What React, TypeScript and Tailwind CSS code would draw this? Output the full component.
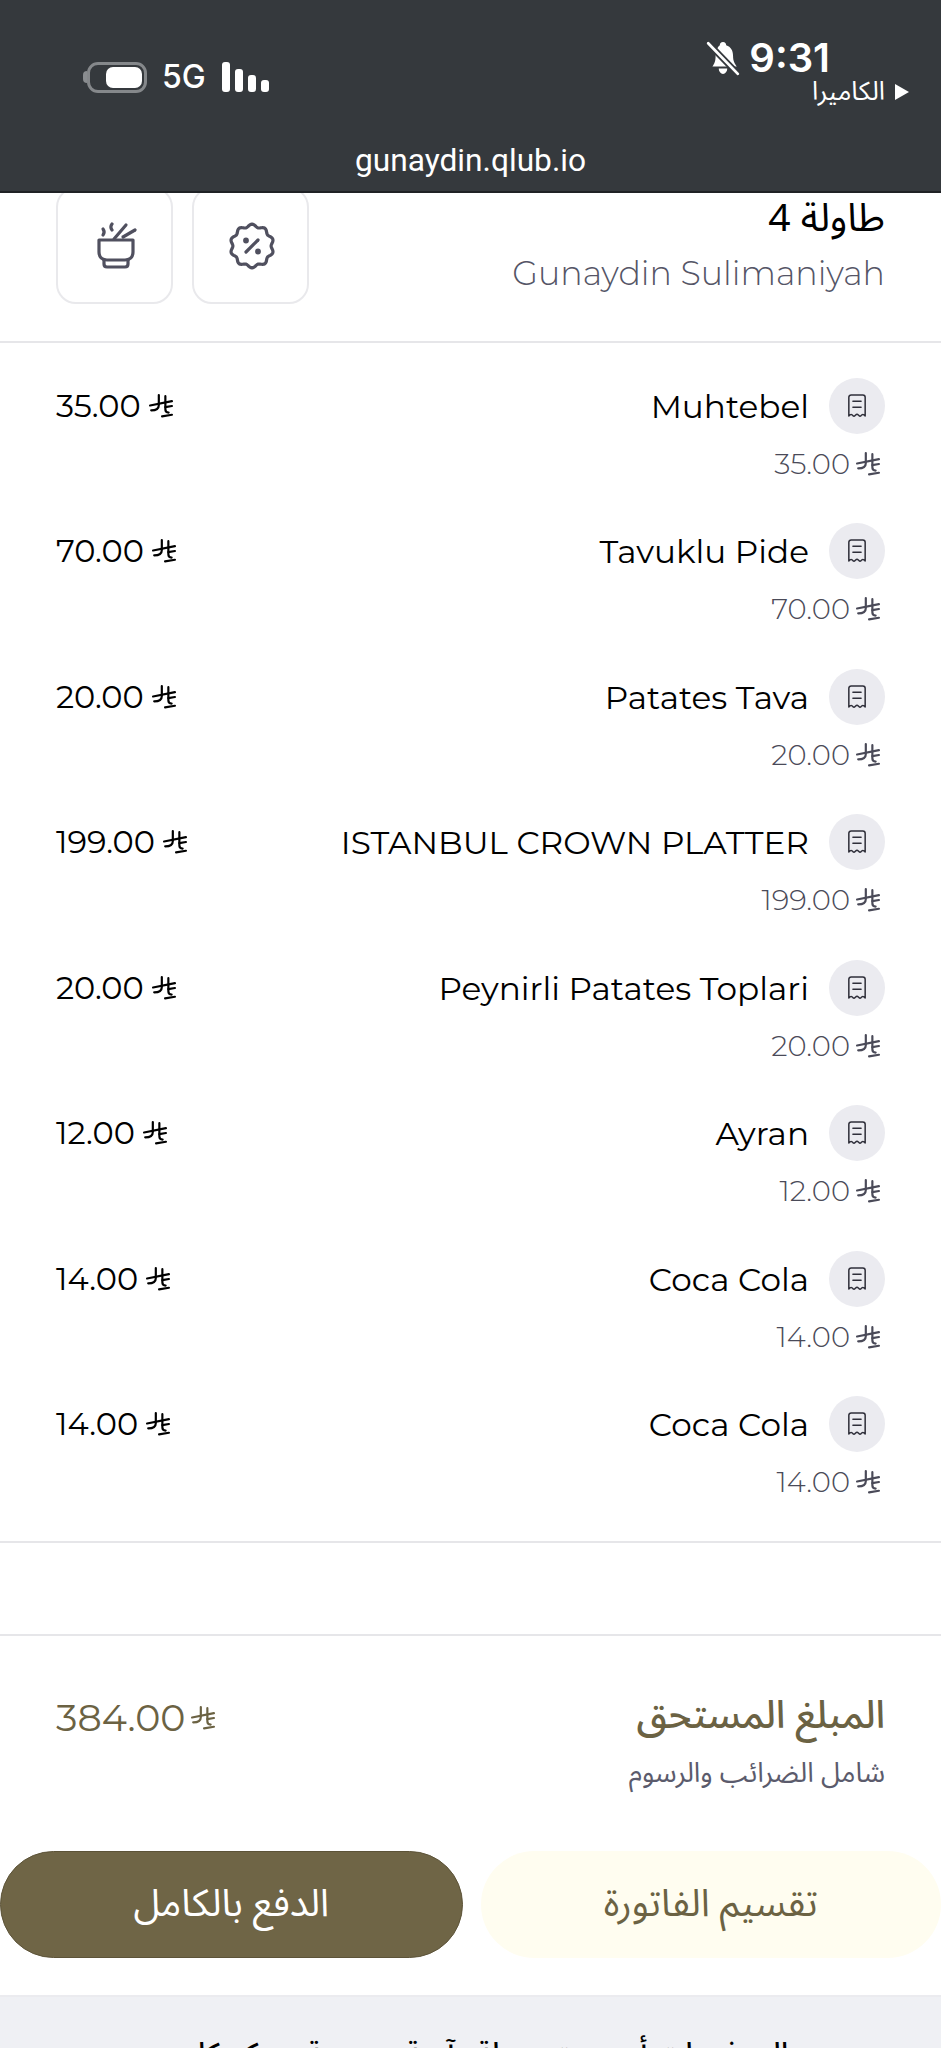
import { FC } from "react";

const ITEMS = [
  { name: "Muhtebel", price: "35.00" },
  { name: "Tavuklu Pide", price: "70.00" },
  { name: "Patates Tava", price: "20.00" },
  { name: "ISTANBUL CROWN PLATTER", price: "199.00" },
  { name: "Peynirli Patates Toplari", price: "20.00" },
  { name: "Ayran", price: "12.00" },
  { name: "Coca Cola", price: "14.00" },
  { name: "Coca Cola", price: "14.00" },
];

const LATIN = "font-['Montserrat','Inter','Noto_Sans',sans-serif]";
const ARABIC = "font-['Noto_Sans_Arabic','DejaVu_Sans',sans-serif]";

// scalloped outline of the discount badge
const badgePath = Array.from({ length: 121 }, (_, i) => {
  const t = (i / 120) * Math.PI * 2;
  const r = 20.5 + 1.4 * Math.cos(t * 10);
  const x = 23 + r * Math.sin(t);
  const y = 24 - r * Math.cos(t);
  return `${i === 0 ? "M" : "L"}${x.toFixed(2)} ${y.toFixed(2)}`;
}).join(" ");

const Currency: FC<{ className?: string }> = ({ className }) => (
  <svg viewBox="1 1 22 22" fill="none" stroke="currentColor" strokeWidth="2" strokeLinecap="round" className={className}>
    <path d="M10 2V11C10 14.5 8 16 3 16" />
    <path d="M16 3V15C16 17 17 18 19 18" />
    <path d="M2 11.5L22 7.5" />
    <path d="M16 13L22 12" />
    <path d="M13 21.5L22 20" />
  </svg>
);

const Receipt: FC = () => (
  <svg viewBox="0 0 24 24" fill="none" stroke="#2f2f3a" strokeWidth="1.3" strokeLinejoin="round" strokeLinecap="round" className="w-7 h-7">
    <path d="M5 20.5V4.5C5 3.4 5.9 2.5 7 2.5H17C18.1 2.5 19 3.4 19 4.5V20.5C17.5 19 16.5 19 15.2 20.5C14 21.5 13.2 19 12 19C10.8 19 10 21.5 8.8 20.5C7.5 19 6.5 19 5 20.5Z" />
    <path d="M8.5 8H15.5" />
    <path d="M8.5 13H15.5" />
  </svg>
);

const Bowl: FC = () => (
  <svg viewBox="0 0 42 48" fill="none" stroke="#50505f" strokeWidth="3.2" strokeLinecap="round" strokeLinejoin="round" className="w-[42px] h-12">
    <path d="M3 18H37V30C37 35 34 38 29 38H11C6 38 3 35 3 30Z" />
    <path d="M8 38V42C8 44 9 45 11 45H29C31 45 32 44 32 42V38" />
    <path d="M18 17L30 3" />
    <path d="M27 15L39 8" />
    <path d="M16 2C14.5 4 14.5 6 16 8" />
    <path d="M7 7C8.5 9 8.5 11 7 13" />
  </svg>
);

const Badge: FC = () => (
  <svg viewBox="0 0 46 48" fill="none" stroke="#50505f" strokeWidth="3.2" strokeLinecap="round" strokeLinejoin="round" className="w-[46px] h-12">
    <path d={badgePath} />
    <path d="M29 18L17 30" />
    <circle cx="17" cy="18.5" r="1.3" fill="#50505f" />
    <circle cx="29" cy="29.5" r="1.3" fill="#50505f" />
  </svg>
);

const StatusBar: FC = () => (
  <div dir="ltr" className="h-[193px] shrink-0 flex flex-col bg-[#35393d] border-b-2 border-[#1f2225] text-white font-['Inter',sans-serif]">
    <div className="flex justify-between pl-[83px] pr-[32px] pt-[38px] h-[136px]">
      <div className="flex items-center h-[40px] mt-[19px] gap-[16px]">
        <div className="flex items-center">
          <div className="w-[4px] h-[12px] rounded-l-full bg-[#8a8d90]" />
          <div className="w-[60px] h-[31px] rounded-[11px] border-[3px] border-[#85888b] flex justify-end items-center pr-[2px]">
            <div className="w-[36px] h-[21px] rounded-[7px] bg-white" />
          </div>
        </div>
        <span className="text-[32px] font-medium leading-none -ml-[1px]">5G</span>
        <div className="flex items-end gap-[5px] h-[30px]">
          <div className="w-[8px] h-[30px] rounded-[3px] bg-white" />
          <div className="w-[8px] h-[23px] rounded-[3px] bg-white" />
          <div className="w-[8px] h-[17px] rounded-[3px] bg-white" />
          <div className="w-[8px] h-[12px] rounded-[3px] bg-white" />
        </div>
      </div>
      <div className="flex flex-col items-end">
        <div className="flex items-center gap-[8px] mr-[79px] h-[40px]">
          <svg viewBox="0 0 34 34" className="w-[36px] h-[36px]" fill="white">
            <path d="M17 2C19 2 20 3.5 20 5C24.5 6.5 26.5 10 26.5 15C26.5 20 28 22 30 25H7C9 22 10 20 10 15C10 10 12 6.5 14 5C14 3.5 15 2 17 2Z" />
            <path d="M13 27H21C21 30 19 32 17 32C15 32 13 30 13 27Z" />
            <path d="M3 3L31 32" stroke="#35393d" strokeWidth="6" />
            <path d="M3 3L31 32" stroke="white" strokeWidth="2.6" strokeLinecap="round" />
          </svg>
          <span className="text-[40px] font-semibold leading-none">9:31</span>
        </div>
        <div className="flex items-center gap-[10px]">
          <span dir="rtl" className={`text-[26px] leading-[28px] ${ARABIC}`}>الكاميرا</span>
          <span className="w-0 h-0 border-y-[8px] border-y-transparent border-l-[14px] border-l-white" />
        </div>
      </div>
    </div>
    <div className="flex-1 flex items-center justify-center text-[31.7px] leading-none pb-[6px] font-['Roboto',sans-serif]">gunaydin.qlub.io</div>
  </div>
);

const TableHeader: FC = () => (
  <div className="h-[150px] shrink-0 flex justify-between items-start px-[56px] border-b-2 border-[#e6e6e9] overflow-hidden">
    <div className="flex flex-col gap-[10px] pt-[2px]">
      <h1 className={`text-[39px] leading-[48px] text-black ${ARABIC}`}>طاولة 4</h1>
      <p dir="ltr" className={`text-[33.3px] leading-[40px] font-light text-[#555566] ${LATIN}`}>Gunaydin Sulimaniyah</p>
    </div>
    <div className="flex gap-[19px] -mt-[6px]">
      <div className="w-[117px] h-[117px] rounded-[20px] border-2 border-[#e9e9ec] flex items-center justify-center pl-[2px]">
        <Badge />
      </div>
      <div className="w-[117px] h-[117px] rounded-[20px] border-2 border-[#e9e9ec] flex items-center justify-center pl-[5px]">
        <Bowl />
      </div>
    </div>
  </div>
);

export default function App() {
  return (
    <div dir="rtl" className="w-[941px] h-[2048px] overflow-hidden flex flex-col bg-white">
      <StatusBar />
      <TableHeader />

      <div className={`flex flex-col pb-[34px] border-b-2 border-[#e6e6e9] ${LATIN}`}>
        {ITEMS.map((item, idx) => (
          <div key={idx} className="h-[145.45px] pt-[35px] px-[56px] flex justify-between items-start">
            <div className="flex flex-col items-start gap-[12px]">
              <div className="flex items-center gap-[20px]">
                <div className="w-[56px] h-[56px] rounded-full bg-[#ebebf0] flex items-center justify-center">
                  <Receipt />
                </div>
                <span dir="ltr" className="text-[32.7px] leading-[40px] font-normal text-black">{item.name}</span>
              </div>
              <div dir="ltr" className="flex items-center gap-[6px] self-end ml-auto text-[#4a4a58] pr-[5px]">
                <span className="text-[29px] leading-[36px] font-light">{item.price}</span>
                <Currency className="w-[24px] h-[24px]" />
              </div>
            </div>
            <div dir="ltr" className="flex items-center gap-[8px] h-[56px] text-black">
              <span className="text-[32px] font-[450] leading-[40px]">{item.price}</span>
              <Currency className="w-[24px] h-[24px]" />
            </div>
          </div>
        ))}
      </div>

      <div className="h-[93px] shrink-0 border-b-2 border-[#e6e6e9]" />

      <div className="flex justify-between items-start px-[56px] pt-[58px]">
        <div className="flex flex-col gap-[18px]">
          <span className={`text-[38.6px] leading-[44px] font-medium text-[#6b6243] ${ARABIC}`}>المبلغ المستحق</span>
          <span className={`text-[27.5px] leading-[34px] text-[#5b5b6c] ${ARABIC}`}>شامل الضرائب والرسوم</span>
        </div>
        <div dir="ltr" className={`flex items-center gap-[5px] h-[48px] text-[#6b6243] ${LATIN}`}>
          <span className="text-[38px] leading-none font-normal">384.00</span>
          <Currency className="w-[24px] h-[24px]" />
        </div>
      </div>

      <div className="flex gap-[18px] mt-[61px]">
        <button className={`flex-1 h-[107px] rounded-full bg-[#fffdf0] text-[#6b6243] text-[38px] ${ARABIC}`}>تقسيم الفاتورة</button>
        <button className={`flex-1 h-[107px] rounded-full bg-[#6f6546] border border-[#5c5338] text-white text-[38px] ${ARABIC}`}>الدفع بالكامل</button>
      </div>

      <div className="mt-[37px] flex-1 bg-[#eff0f4] border-t-2 border-[#ebebef] flex justify-center pt-[38px]">
        <p className={`text-[30px] leading-[40px] font-medium whitespace-nowrap text-black ${ARABIC}`}>المدفوعات أصبحت سهلة وآمنة وسريعة مع كيوكلوب</p>
      </div>
    </div>
  );
}
